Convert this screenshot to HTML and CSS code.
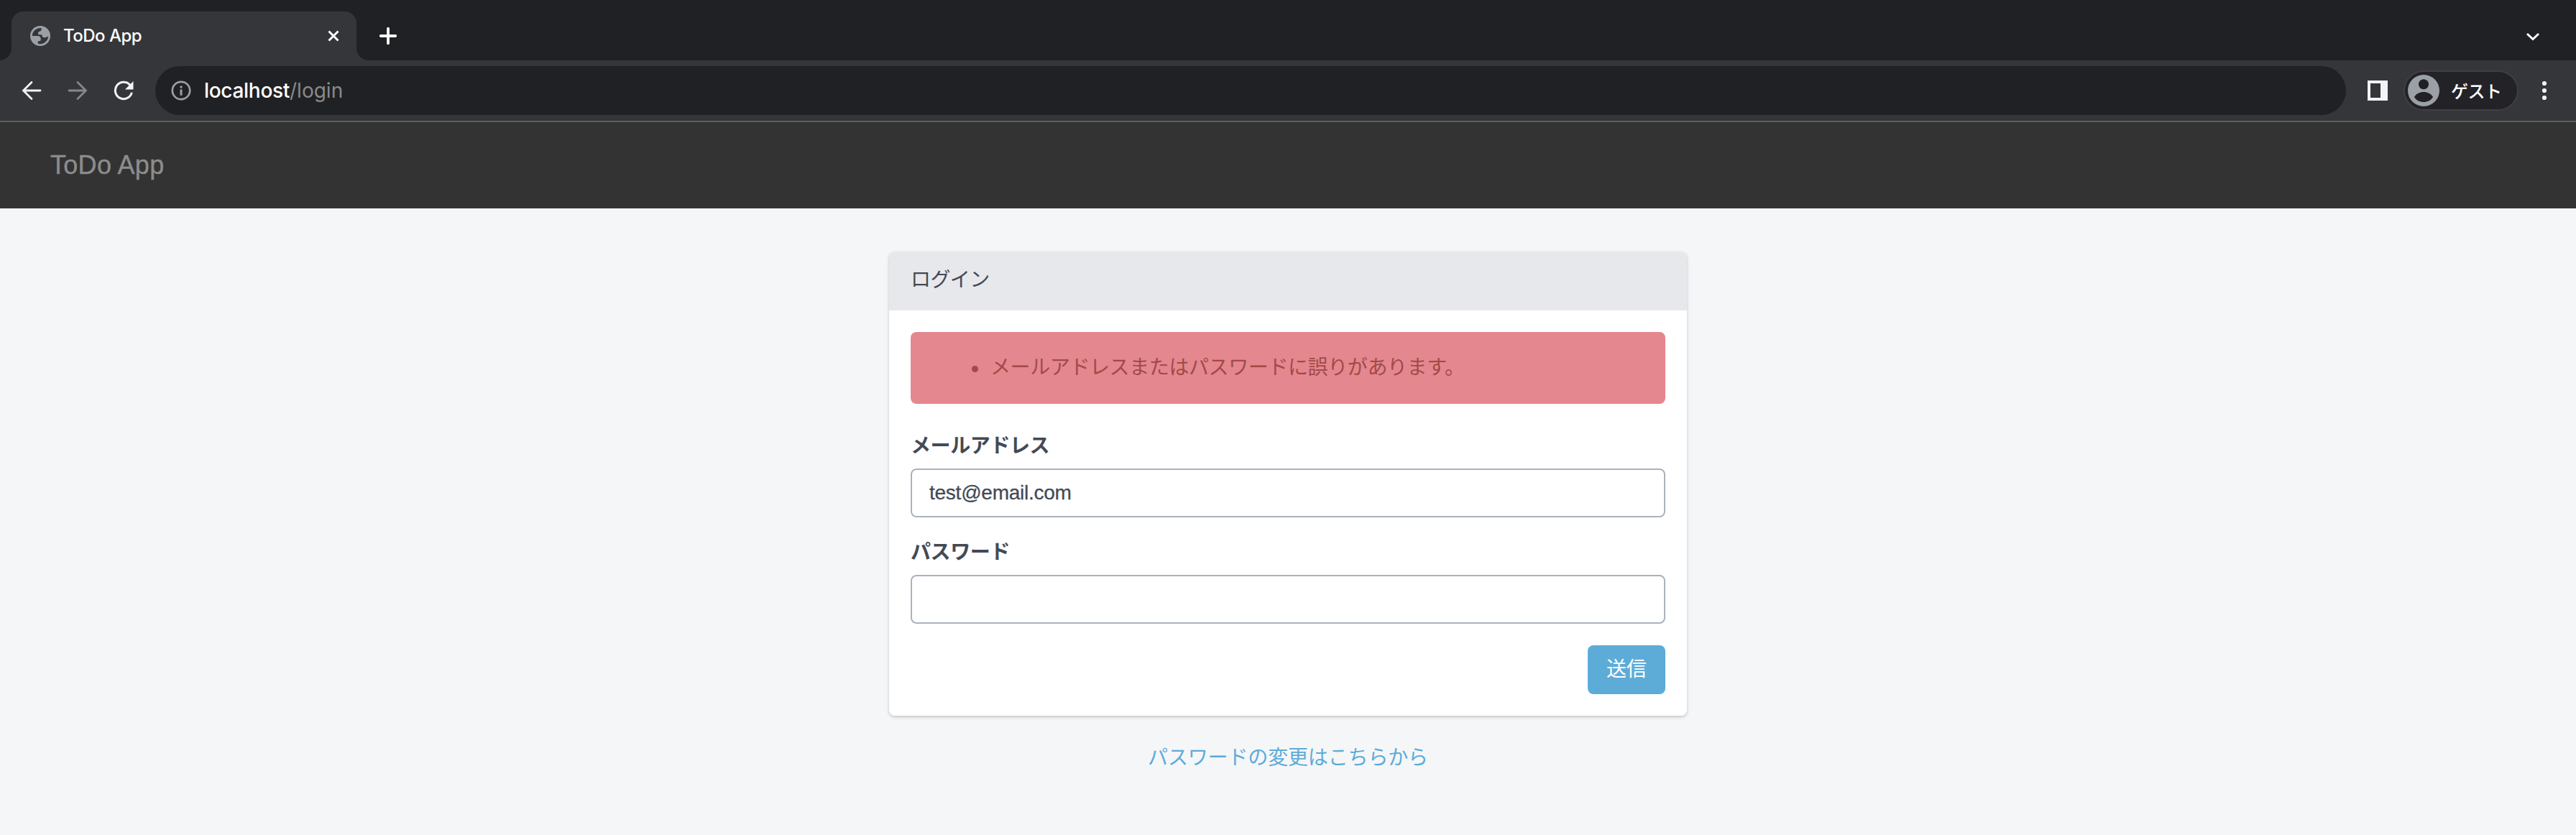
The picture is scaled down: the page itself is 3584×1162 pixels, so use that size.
FILE: index.html
```html
<!DOCTYPE html>
<html lang="ja">
<head>
<meta charset="utf-8">
<title>ToDo App</title>
<link rel="stylesheet" href="styles.css">
</head>
<body>
<div class="tabstrip">
  <div class="tab">
    <svg class="globe" width="28" height="28" viewBox="0 0 28 28"><circle cx="14" cy="14" r="14" fill="#9aa0a6"/><path fill="#35363a" d="M2.800 14A11.200 11.200 0 0 1 15.500 3v2.500q0 2-2.500 2.200-2.300.3-2 3 .2 1.500 2 1.500h2.500q1 0 1.300 2 .3 2 2.500 2 3 .2 5.900-1.700A11.200 11.200 0 0 1 10.800 24.700v-3.500h2q2 0 2-2.700 0-4.500-4.300-4.500z"/></svg>
    <span class="tab-title">ToDo App</span>
    <svg class="close" width="16" height="16" viewBox="0 0 16 16"><path d="M1.500 1.500l13 13M14.500 1.500l-13 13" stroke="#fff" stroke-width="2.900"/></svg>
  </div>
  <svg class="plus" width="24" height="24" viewBox="0 0 24 24"><path d="M12 1.800v20.400M1.800 12h20.400" stroke="#fff" stroke-width="3.800" stroke-linecap="round"/></svg>
  <svg class="chevron" width="20" height="12" viewBox="0 0 20 12"><path d="M2 2l8 7.500L18 2" fill="none" stroke="#fff" stroke-width="3"/></svg>
</div>
<div class="toolbar">
  <svg class="nav-icon" width="28" height="28" viewBox="0 0 28 28"><path d="M26 14H3M14 2.500L2.500 14 14 25.500" fill="none" stroke="#f1f3f4" stroke-width="2.800" stroke-linecap="round"/></svg>
  <svg class="nav-icon" width="28" height="28" viewBox="0 0 28 28"><path d="M2 14h23M14 2.500L25.500 14 14 25.500" fill="none" stroke="#868789" stroke-width="2.800" stroke-linecap="round"/></svg>
  <svg class="nav-icon" width="28" height="28" viewBox="0 0 28 28"><path d="M22.800 6.200A11.700 11.700 0 1 0 25 18" fill="none" stroke="#f1f3f4" stroke-width="3" stroke-linecap="round"/><path d="M27.500 1v11.500H16z" fill="#f1f3f4"/></svg>
  <div class="address">
    <svg width="28" height="28" viewBox="0 0 28 28"><circle cx="14" cy="14" r="12.200" fill="none" stroke="#9aa0a6" stroke-width="2.700"/><path d="M12.500 7.500h3v3h-3zM12.500 12.500h3v8.200h-3z" fill="#9aa0a6"/></svg>
    <span class="url">localhost<span class="path">/login</span></span>
  </div>
  <svg class="panel" width="28" height="28" viewBox="0 0 28 28"><path fill="#f1f3f4" fill-rule="evenodd" d="M0 0h28v28H0zM4 4v20h14V4z"/></svg>
  <div class="profile">
    <svg width="44" height="44" viewBox="0 0 44 44"><circle cx="22" cy="22" r="22" fill="#9aa0a6"/><circle cx="22" cy="13.300" r="7" fill="#202124"/><path d="M9 31C12 26 17 24 22 24s10 2 13 7c-3 5-8 7-13 7s-10-2-13-7z" fill="#202124"/></svg>
    <span>ゲスト</span>
  </div>
  <svg class="menu" width="8" height="28" viewBox="0 0 8 28"><g fill="#f1f3f4"><circle cx="4" cy="4" r="3.100"/><circle cx="4" cy="14" r="3.100"/><circle cx="4" cy="24" r="3.100"/></g></svg>
</div>
<nav class="navbar"><a class="brand">ToDo App</a></nav>
<main class="page">
  <section class="card">
    <header class="card-header">ログイン</header>
    <form class="card-body">
      <ul class="alert"><li>メールアドレスまたはパスワードに誤りがあります。</li></ul>
      <label class="label" for="email">メールアドレス</label>
      <input class="field" id="email" type="text" value="test@email.com">
      <label class="label" for="password">パスワード</label>
      <input class="field" id="password" type="password">
      <button class="submit" type="button">送信</button>
    </form>
  </section>
  <a class="reset">パスワードの変更はこちらから</a>
</main>
</body>
</html>
```
FILE: styles.css
```css
* { box-sizing: border-box; }
body {
  margin: 0;
  height: 1162px;
  overflow: hidden;
  background: #f5f6f8;
  color: #434a54;
  font: 28px/40px "Liberation Sans", "Noto Sans CJK JP", sans-serif;
}
svg { display: block; flex: none; }

.tabstrip {
  display: flex;
  height: 84px;
  padding: 16px 50px 0 16px;
  background: #202124;
}
.tab {
  position: relative;
  display: flex;
  align-items: center;
  width: 480px;
  height: 68px;
  padding: 0 24px 0 26px;
  border-radius: 16px 16px 0 0;
  background: #35363a;
  color: #fff;
  font-family: Inter, sans-serif;
  font-size: 24px;
}
.tab::before, .tab::after {
  content: "";
  position: absolute;
  bottom: 0;
  width: 16px;
  height: 16px;
}
.tab::before { left: -16px; background: radial-gradient(circle at 0 0, transparent 15.5px, #35363a 16px); }
.tab::after { right: -16px; background: radial-gradient(circle at 100% 0, transparent 15.5px, #35363a 16px); }
.tab-title { flex: 1; margin-left: 18px; font-weight: 500; letter-spacing: -0.5px; }
.plus { margin: 22px 0 0 32px; }
.chevron { margin: 29px 0 0 auto; }

.toolbar {
  display: flex;
  align-items: center;
  height: 86px;
  padding: 0 40px 0 30px;
  border-bottom: 2px solid #5b5e64;
  background: #35363a;
}
.nav-icon { margin-right: 36px; }
.nav-icon + .nav-icon + .nav-icon { margin-right: 30px; }
.address {
  display: flex;
  align-items: center;
  width: 3048px;
  height: 68px;
  padding-left: 22px;
  border-radius: 34px;
  background: #202124;
}
.url {
  margin-left: 18px;
  color: #fff;
  font-family: Inter, sans-serif;
  font-weight: 500;
  letter-spacing: -0.3px;
}
.path { color: #88898b; font-weight: 400; letter-spacing: 0; }
.panel { margin-left: 30px; }
.profile {
  display: flex;
  align-items: center;
  width: 160px;
  height: 56px;
  margin-left: 22px;
  padding-left: 4px;
  border: 2px solid #3f3f44;
  border-radius: 28px;
  background: #232227;
  color: #fff;
  font: 500 24px/36px "Noto Sans CJK JP", sans-serif;
}
.profile span { margin-left: 16px; letter-spacing: -0.5px; }
.menu { margin-left: 32px; }

.navbar {
  display: flex;
  align-items: center;
  height: 120px;
  padding-left: 70px;
  background: #333;
}
.brand { color: #8c8c8c; font-size: 36px; letter-spacing: 0.3px; -webkit-text-stroke: 0.4px #8c8c8c; }

.page {
  display: flex;
  flex-direction: column;
  align-items: center;
  padding-top: 60px;
}
.card {
  width: 1110px;
  height: 646px;
  border-radius: 8px;
  background: #fff;
  box-shadow: 0 2px 4px rgba(0, 0, 0, 0.2);
  letter-spacing: -0.4px;
}
.card-header {
  height: 82px;
  padding: 20px 30px;
  border-radius: 8px 8px 0 0;
  background: #e7e8ec;
  letter-spacing: -0.6px;
}
.card-body {
  display: flex;
  flex-direction: column;
  padding: 30px;
}
.alert {
  height: 100px;
  margin: 0 0 39px;
  padding: 30px 30px 30px 109px;
  border-radius: 8px;
  background: #e5878f;
  color: #a04b48;
  list-style: none;
}
.alert li {
  display: flex;
  align-items: center;
  margin-left: -24px;
  gap: 17px;
}
.alert li::before {
  content: "";
  width: 9px;
  height: 9px;
  margin-top: 2px;
  border-radius: 50%;
  background: #a04b48;
}
.label { margin-bottom: 11px; font-weight: 700; }
.field {
  height: 68px;
  margin-bottom: 29px;
  padding: 0 24px;
  border: 2px solid #aab2bd;
  border-radius: 8px;
  background: #fff;
  color: inherit;
  font: inherit;
  letter-spacing: -0.25px;
  outline: 0;
}
#email { -webkit-text-stroke: 0.3px #434a54; }
.submit {
  align-self: flex-end;
  width: 108px;
  height: 68px;
  margin-top: 1px;
  border: 0;
  border-radius: 8px;
  background: #5dacd8;
  color: #fff;
  font: inherit;
}
.reset {
  margin-top: 39px;
  color: #5dacd8;
  letter-spacing: -0.15px;
}
```
